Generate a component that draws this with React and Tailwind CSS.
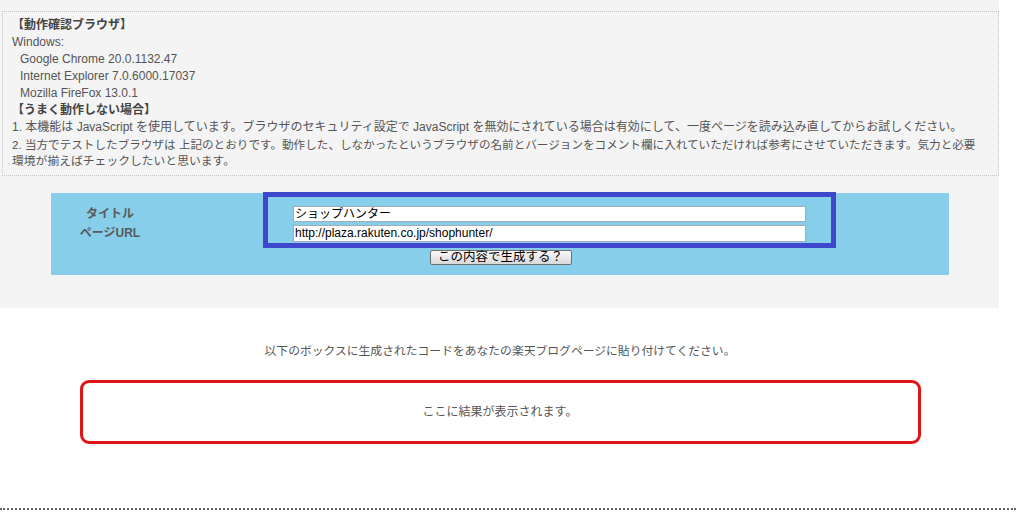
export default function App() {
  return (
    <div className="w-[1016px] h-[527px] bg-white overflow-hidden font-['Liberation_Sans','Noto_Sans_CJK_JP',sans-serif] text-[#555]">
      {/* gray upper area */}
      <div className="w-[999px] bg-[#f4f4f4] pt-[11px] pb-[33px]">
        <div className="ml-[2px] w-[997px] border border-dotted border-[#c4c4c4] pl-[9px] pt-[5px] pb-[5px] text-[12px] leading-[17px] whitespace-nowrap">
          <div className="font-bold text-[#444]">【動作確認ブラウザ】</div>
          <div>Windows:</div>
          <div className="pl-[8px]">Google Chrome 20.0.1132.47</div>
          <div className="pl-[8px]">Internet Explorer 7.0.6000.17037</div>
          <div className="pl-[8px]">Mozilla FireFox 13.0.1</div>
          <div className="font-bold text-[#444]">【うまく動作しない場合】</div>
          <div className="text-[12px]">1. 本機能は JavaScript を使用しています。ブラウザのセキュリティ設定で JavaScript を無効にされている場合は有効にして、一度ページを読み込み直してからお試しください。</div>
          <div className="text-[11.6px]">2. 当方でテストしたブラウザは 上記のとおりです。動作した、しなかったというブラウザの名前とバージョンをコメント欄に入れていただければ参考にさせていただきます。気力と必要</div>
          <div className="text-[11.8px]">環境が揃えばチェックしたいと思います。</div>
        </div>

        <div className="relative ml-[51px] mt-[17px] w-[898px] h-[82px] bg-[#87ceeb] pt-[13px]">
          <div className="flex">
            <div className="w-[118px] flex flex-col items-center text-[12px] leading-[19px] font-bold text-[#5a5a5a] -mt-[1px]">
              <div>タイトル</div>
              <div>ページURL</div>
            </div>
            <div className="ml-[124px] w-[513px] flex flex-col gap-[3px]">
              <div className="h-[16px] bg-white border border-[#a3abb3] pl-[1px] text-[12px] leading-[14px] text-black">ショップハンター</div>
              <div className="h-[17px] bg-white border border-[#a3abb3] pl-[1px] text-[12px] leading-[15px] text-black">http://plaza.rakuten.co.jp/shophunter/</div>
            </div>
          </div>
          <div className="flex justify-center mt-[7px]">
            <button className="h-[15px] w-[142px] flex items-center justify-center border border-[#6f6f6f] rounded-[2px] bg-gradient-to-b from-[#fafafa] to-[#d9d9d9] text-[12.5px] leading-none text-black ml-[1px]">
              この内容で生成する？
            </button>
          </div>
          {/* highlight annotation */}
          <div className="absolute left-[212px] -top-[1px] w-[573px] h-[56px] border-[5px] border-[#3f48cc] pointer-events-none"></div>
        </div>
      </div>

      {/* white lower area */}
      <div className="w-[1000px] flex flex-col items-center">
        <div className="mt-[35px] text-[11.8px] leading-[17px] text-[#555] whitespace-nowrap">
          以下のボックスに生成されたコードをあなたの楽天ブログページに貼り付けてください。
        </div>
        <div className="mt-[20px] w-[841px] h-[64px] border-[3px] border-[#e01414] rounded-[9px] flex items-center justify-center text-[12px] text-[#555]">
          ここに結果が表示されます。
        </div>
      </div>
      <div className="mt-[64px] w-[1016px] border-t-2 border-dotted border-[#666]"></div>
    </div>
  );
}
